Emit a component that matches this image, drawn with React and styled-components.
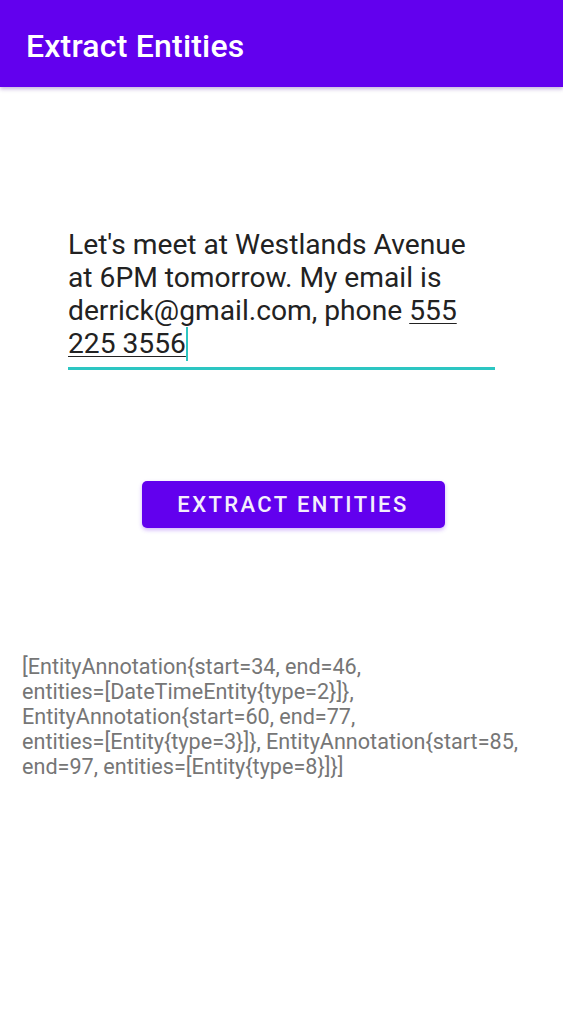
import React from "react";
import styled, { createGlobalStyle } from "styled-components";

const Global = createGlobalStyle`
  html, body { margin: 0; padding: 0; background: #ffffff; }
  body { font-family: Roboto, "Noto Sans", sans-serif; }
`;

const Screen = styled.div`
  width: 563px;
  min-height: 1024px;
  background: #ffffff;
  display: flex;
  flex-direction: column;
`;

const AppBar = styled.header`
  height: 87px;
  background: #6200ee;
  display: flex;
  align-items: center;
  padding: 0 26px;
  box-sizing: border-box;
  box-shadow: 0 2px 4px rgba(60, 0, 140, 0.3);
  position: relative;
  z-index: 1;
`;

const Title = styled.h1`
  margin: 4px 0 0 0;
  font-family: Roboto, sans-serif;
  font-weight: 500;
  font-size: 32px;
  color: #ffffff;
  letter-spacing: 0.2px;
`;

const Content = styled.main`
  display: flex;
  flex-direction: column;
  align-items: stretch;
  padding-top: 141px;
`;

const Field = styled.div`
  margin: 0 68px;
  width: 427px;
  border-bottom: 3px solid #2cc6c2;
  padding-bottom: 6px;
`;

const FieldText = styled.div`
  padding-right: 22px;
  font-family: Roboto, sans-serif;
  font-size: 28.2px;
  line-height: 33px;
  color: #222222;
`;

const Phone = styled.span`
  text-decoration: underline;
  text-decoration-thickness: 1px;
  text-underline-offset: 3px;
`;

const Caret = styled.span`
  display: inline-block;
  width: 2px;
  height: 34px;
  background: #2cc6c2;
  vertical-align: -8px;
`;

const ButtonRow = styled.div`
  display: flex;
  justify-content: center;
  padding-top: 111px;
`;

const Button = styled.button`
  width: 303px;
  height: 47px;
  margin-left: 23px;
  border: none;
  border-radius: 5px;
  background: #6200ee;
  color: #f4eefc;
  font-family: Roboto, sans-serif;
  font-weight: 500;
  font-size: 22px;
  letter-spacing: 2.4px;
  text-transform: uppercase;
  box-shadow: 0 2px 4px rgba(98, 0, 238, 0.3);
  padding: 0;
`;

const Result = styled.p`
  margin: 126px 0 0 0;
  padding: 0 22px;
  font-family: Roboto, sans-serif;
  font-size: 21.6px;
  line-height: 25px;
  color: #767676;
  white-space: pre-line;
`;

const RESULT = [
  "[EntityAnnotation{start=34, end=46,",
  "entities=[DateTimeEntity{type=2}]},",
  "EntityAnnotation{start=60, end=77,",
  "entities=[Entity{type=3}]}, EntityAnnotation{start=85,",
  "end=97, entities=[Entity{type=8}]}]",
].join("\n");

export default function App() {
  return (
    <>
      <Global />
      <Screen>
        <AppBar>
          <Title>Extract Entities</Title>
        </AppBar>
        <Content>
          <Field>
            <FieldText>
              Let's meet at Westlands Avenue at 6PM tomorrow. My email is
              derrick@gmail.com, phone <Phone>555 225 3556</Phone>
              <Caret />
            </FieldText>
          </Field>
          <ButtonRow>
            <Button>Extract Entities</Button>
          </ButtonRow>
          <Result>{RESULT}</Result>
        </Content>
      </Screen>
    </>
  );
}
